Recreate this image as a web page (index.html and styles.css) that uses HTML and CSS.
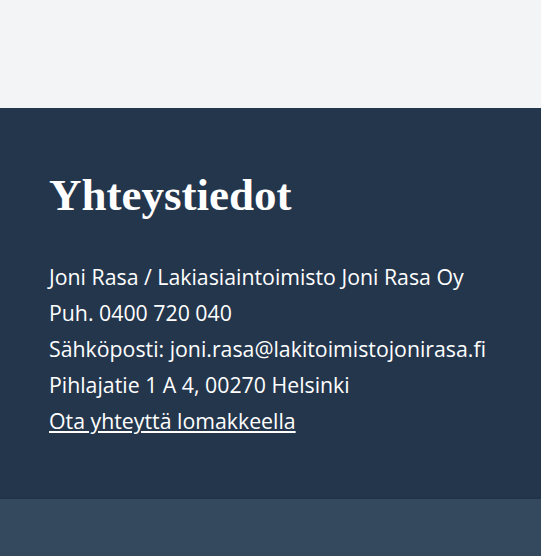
FILE: index.html
```html
<!DOCTYPE html>
<html lang="fi">
<head>
    <meta charset="UTF-8">
    <meta name="viewport" content="width=device-width, initial-scale=1.0">
    <title>Yhteystiedot</title>
    <link rel="stylesheet" href="styles.css">
</head>
<body>
    <div id="top"></div>
    <section id="contact">
        <h2>Yhteystiedot</h2>
        <p>Joni Rasa / Lakiasiaintoimisto Joni Rasa Oy</p>
        <p>Puh. 0400 720 040</p>
        <p>Sähköposti: joni.rasa@lakitoimistojonirasa.fi</p>
        <p>Pihlajatie 1 A 4, 00270 Helsinki</p>
        <p><a href="#">Ota yhteyttä lomakkeella</a></p>
    </section>
    <footer id="bottom"></footer>
</body>
</html>
```

FILE: styles.css
```css
body {
    margin: 0;
    font-family: "Open Sans", Arial, sans-serif;
    background: #34495e;
}

#top {
    height: 108px;
    background: #f3f4f6;
}

#contact {
    background: #24364c;
    color: #fff;
    padding: 60px 49px 58px;
    border-bottom: 2px solid #203349;
}

#contact h2 {
    font-family: "Liberation Serif", serif;
    font-size: 45px;
    font-weight: bold;
    margin: 0 0 37px;
    line-height: 54px;
}

#contact p {
    margin: 0;
    font-size: 21.3px;
    line-height: 36px;
}

#contact a {
    color: #fff;
}

#bottom {
    height: 60px;
}
```
